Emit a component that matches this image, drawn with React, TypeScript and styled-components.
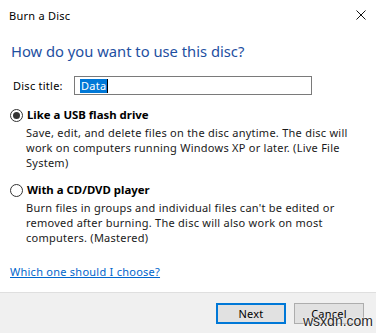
import React from "react"
import styled, { createGlobalStyle } from "styled-components"

const GlobalStyle = createGlobalStyle`
	html, body {
		margin: 0;
		padding: 0;
		background: #ffffff;
	}

	body {
		font-family: "Noto Sans", "Open Sans", sans-serif;
		font-size: 11px;
		letter-spacing: 0.25px;
		color: #000000;
	}
`

const Dialog = styled.div`
	width: 376px;
	height: 333px;
	display: flex;
	flex-direction: column;
	position: relative;
	overflow: hidden;
	background: #ffffff;
`

const TitleBar = styled.div`
	height: 30px;
	display: flex;
	align-items: center;
	justify-content: space-between;
	padding: 0 10px 0 9px;
`

const TitleText = styled.span`
	font-size: 11px;
	line-height: 15px;
	margin-top: 1px;
`

const CloseButton = styled.span`
	width: 10px;
	height: 10px;
	display: flex;
`

const Body = styled.div`
	flex: 1;
	display: flex;
	flex-direction: column;
	padding: 11px 0 0 11px;
`

const Heading = styled.h1`
	margin: 0;
	font-size: 14.75px;
	font-weight: 400;
	letter-spacing: 0;
	line-height: 20px;
	color: #1e4fa1;
`

const TitleRow = styled.div`
	display: grid;
	grid-template-columns: 61px 238px;
	align-items: center;
	margin-top: 15px;
	padding-left: 2px;
`

const FieldLabel = styled.span`
	font-size: 11px;
	line-height: 15px;
`

const TitleInput = styled.div`
	height: 19px;
	box-sizing: border-box;
	border: 1px solid #7a7a7a;
	display: flex;
	align-items: center;
	padding-left: 5px;
`

const Selected = styled.span`
	background: #0078d7;
	color: #ffffff;
	font-size: 11px;
	line-height: 14px;
	padding: 0 1px;
`

const Caret = styled.span`
	width: 1px;
	height: 14px;
	background: #000000;
`

const Option = styled.div<{ $top: number }>`
	display: flex;
	flex-direction: column;
	margin-top: ${p => p.$top}px;
`

const OptionHead = styled.div`
	display: flex;
	align-items: center;
	gap: 4px;
	margin-left: -1px;
`

const Radio = styled.span<{ $checked?: boolean }>`
	width: 13px;
	height: 13px;
	box-sizing: border-box;
	border-radius: 50%;
	border: 1px solid #333333;
	display: flex;
	align-items: center;
	justify-content: center;

	&::after {
		content: "";
		width: 7px;
		height: 7px;
		border-radius: 50%;
		background: #333333;
		display: ${p => (p.$checked ? "block" : "none")};
	}
`

const OptionLabel = styled.span`
	font-size: 11.4px;
	font-weight: 700;
	letter-spacing: 0;
	line-height: 16px;
`

const OptionText = styled.p`
	margin: 2px 0 0 15px;
	font-size: 11px;
	line-height: 15px;
	color: #1a1a1a;
`

const HelpLink = styled.a`
	margin-top: 19px;
	margin-left: -1px;
	align-self: flex-start;
	font-size: 11px;
	line-height: 15px;
	color: #0066cc;
	text-decoration: underline;
`

const Footer = styled.div`
	height: 41px;
	box-sizing: border-box;
	background: #f0f0f0;
	border-top: 1px solid #dfdfdf;
	display: flex;
	justify-content: flex-end;
	align-items: flex-start;
	gap: 8px;
	padding: 10px 12px 0 0;
`

const Button = styled.button<{ $primary?: boolean }>`
	width: 70px;
	height: 21px;
	box-sizing: border-box;
	background: #e1e1e1;
	border: ${p => (p.$primary ? "2px solid #0078d7" : "1px solid #adadad")};
	font-family: "Noto Sans", "Open Sans", sans-serif;
	font-size: 11px;
	letter-spacing: 0.25px;
	line-height: 14px;
	color: #000000;
	padding: 0;
`

const Watermark = styled.span`
	position: absolute;
	left: 303px;
	top: 313px;
	font-family: "Liberation Sans", sans-serif;
	font-size: 14px;
	letter-spacing: 0;
	line-height: 16px;
	color: #2a2a2a;
	text-shadow: 0 0 2px #ffffff, 0 0 2px #ffffff;
`

export default function App() {
	return (
		<Dialog>
			<GlobalStyle />
			<TitleBar>
				<TitleText>Burn a Disc</TitleText>
				<CloseButton>
					<svg width="10" height="10" viewBox="0 0 10 10">
						<path
							d="M0.5 0.5 L9.5 9.5 M9.5 0.5 L0.5 9.5"
							stroke="#111"
							strokeWidth="1"
						/>
					</svg>
				</CloseButton>
			</TitleBar>
			<Body>
				<Heading>How do you want to use this disc?</Heading>
				<TitleRow>
					<FieldLabel>Disc title:</FieldLabel>
					<TitleInput>
						<Selected>Data</Selected>
						<Caret />
					</TitleInput>
				</TitleRow>
				<Option $top={12}>
					<OptionHead>
						<Radio $checked />
						<OptionLabel>Like a USB flash drive</OptionLabel>
					</OptionHead>
					<OptionText>
						Save, edit, and delete files on the disc anytime. The disc will
						<br />
						work on computers running Windows XP or later. (Live File
						<br />
						System)
					</OptionText>
				</Option>
				<Option $top={12}>
					<OptionHead>
						<Radio />
						<OptionLabel>With a CD/DVD player</OptionLabel>
					</OptionHead>
					<OptionText>
						Burn files in groups and individual files can't be edited or
						<br />
						removed after burning. The disc will also work on most
						<br />
						computers. (Mastered)
					</OptionText>
				</Option>
				<HelpLink href="#">Which one should I choose?</HelpLink>
			</Body>
			<Footer>
				<Button $primary>Next</Button>
				<Button>Cancel</Button>
			</Footer>
			<Watermark>wsxdn.com</Watermark>
		</Dialog>
	)
}
